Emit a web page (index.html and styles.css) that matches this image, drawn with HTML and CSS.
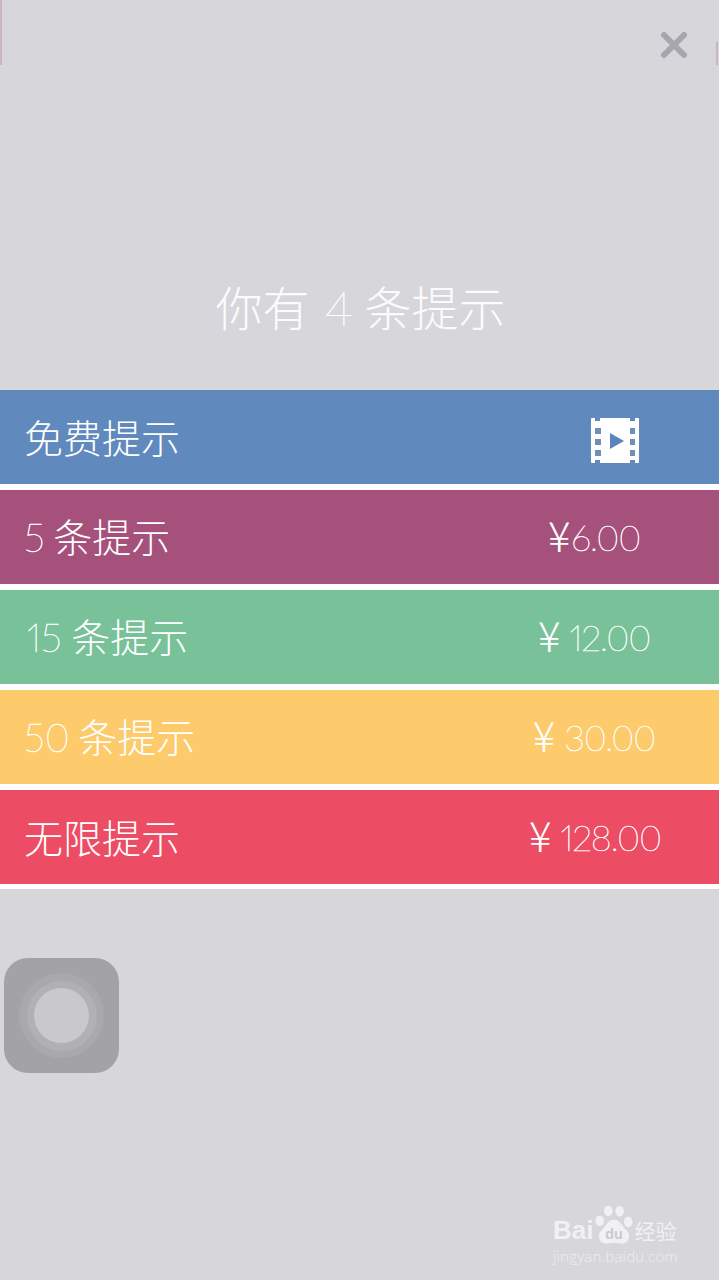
FILE: index.html
```html
<!DOCTYPE html>
<html>
<head>
<meta charset="UTF-8">
<title>提示</title>
<link rel="stylesheet" href="styles.css">
</head>
<body>
	<div class="page">
		<div class="edge edge-left"></div>
		<div class="edge edge-right"></div>

		<div class="top">
			<div class="close-row">
				<svg class="close" width="30" height="30" viewBox="0 0 30 30">
					<path d="M5 5L25 25M25 5L5 25" stroke="#a6a7ac" stroke-width="6" stroke-linecap="round"/>
				</svg>
			</div>
			<h1 class="title"><span>你有</span> <span class="num">4</span> <span>条提示</span></h1>
		</div>

		<div class="list">
			<div class="row blue">
				<span class="name">免费提示</span>
				<span class="price price-icon">
					<svg width="48" height="45" viewBox="0 0 48 45">
						<path fill="#fff" d="M1 0H4V3H9V0H39V3H44V0H47Q48 0 48 1V44Q48 45 47 45H44V42H39V45H9V42H4V45H1Q0 45 0 44V1Q0 0 1 0Z"/>
						<g fill="#6f8fb5">
							<rect x="4" y="10" width="6" height="6"/>
							<rect x="4" y="21" width="6" height="6"/>
							<rect x="4" y="32" width="6" height="6"/>
							<rect x="39" y="10" width="5" height="6"/>
							<rect x="39" y="21" width="5" height="6"/>
							<rect x="39" y="32" width="5" height="6"/>
						</g>
						<path fill="#5b85ba" d="M19 15L33 23L19 31Z"/>
					</svg>
				</span>
			</div>
			<div class="row purple">
				<span class="name"><span class="num">5</span> 条提示</span>
				<span class="price"><span class="yen">¥</span><span class="num tight">6.00</span></span>
			</div>
			<div class="row green">
				<span class="name"><span class="num fifteen">15</span> 条提示</span>
				<span class="price"><span class="yen">¥</span> <span class="num tight">12.00</span></span>
			</div>
			<div class="row yellow">
				<span class="name"><span class="num">50</span> 条提示</span>
				<span class="price"><span class="yen">¥</span> <span class="num tight">30.00</span></span>
			</div>
			<div class="row red">
				<span class="name">无限提示</span>
				<span class="price"><span class="yen">¥</span> <span class="num tight">128.00</span></span>
			</div>
		</div>

		<div class="touch">
			<div class="touch-ring3">
				<div class="touch-ring2">
					<div class="touch-dot"></div>
				</div>
			</div>
		</div>

		<div class="mark">
			<div class="mark-top">
				<span class="mark-bai">Bai</span>
				<svg class="mark-paw" width="38" height="41" viewBox="0 0 40 42">
					<g fill="#f1f1f4">
						<ellipse cx="5" cy="16" rx="4.5" ry="5.5"/>
						<ellipse cx="14" cy="5.5" rx="4.5" ry="5.5"/>
						<ellipse cx="26" cy="6" rx="4.5" ry="5.5"/>
						<ellipse cx="35" cy="17" rx="4.5" ry="5.5"/>
						<path d="M20 15C27 15 29 23 34 27C39 33 34 41 27 40C22 39 18 39 13 40C6 41 1 33 6 27C11 23 13 15 20 15Z"/>
					</g>
					<text x="20" y="35" class="mark-du">du</text>
				</svg>
				<span class="mark-cn">经验</span>
			</div>
			<div class="mark-url">jingyan.baidu.com</div>
		</div>
	</div>
</body>
</html>
```

FILE: styles.css
```css
html, body {
	margin: 0;
	padding: 0;
}

body {
	width: 719px;
	height: 1280px;
	overflow: hidden;
	background: #d6d6db;
	font-family: "Noto Sans CJK SC", sans-serif;
	font-weight: 300;
	color: #fff;
}

.page {
	position: relative;
	height: 1280px;
}

.edge {
	position: absolute;
	top: 0;
	width: 2px;
	height: 65px;
	background: #cdb4c4;
}

.edge-left {
	left: 0;
}

.edge-right {
	right: 1px;
	top: 42px;
	height: 23px;
}

.top {
	height: 390px;
	display: flex;
	flex-direction: column;
}

.close-row {
	display: flex;
	justify-content: flex-end;
	padding: 30px 30px 0 0;
}

.title {
	margin: 216px 0 0;
	padding-left: 2px;
	font-size: 47px;
	font-weight: 300;
	line-height: 60px;
	text-align: center;
	color: #fbfbfc;
}

.num {
	font-family: Lato, sans-serif;
	font-weight: 100;
	font-variant-numeric: proportional-nums;
	-webkit-text-stroke: 0.5px #fff;
}

.title .num {
	margin: 0 1px 0 5px;
}

.fifteen {
	margin-left: 3px;
	margin-right: 1px;
}

.list {
	display: flex;
	flex-direction: column;
	gap: 6px;
	padding-bottom: 5px;
	background: #fff;
}

.row {
	height: 94px;
	display: flex;
	align-items: center;
	justify-content: space-between;
	padding-left: 24px;
}

.blue {
	background: #6089bd;
}

.purple {
	background: #a5517b;
}

.green {
	background: #79c199;
}

.yellow {
	background: #fdca6c;
}

.red {
	background: #ec4c64;
}

.name {
	font-size: 39px;
	line-height: 50px;
	margin-top: -2px;
}

.price {
	width: 190px;
	padding-right: 60px;
	box-sizing: border-box;
	margin-top: -3px;
	text-align: center;
	font-size: 36px;
	line-height: 50px;
	white-space: nowrap;
}

.price-icon {
	height: 45px;
	line-height: 0;
	padding-right: 18px;
	margin-top: 6px;
}

.yen {
	font-family: "Noto Sans CJK SC", sans-serif;
	font-size: 42px;
	vertical-align: -1px;
	margin-right: 1px;
}

.tight {
	letter-spacing: -1.2px;
}

.touch {
	position: absolute;
	left: 4px;
	top: 958px;
	width: 115px;
	height: 115px;
	border-radius: 24px;
	background: #a3a3a7;
	display: flex;
	align-items: center;
	justify-content: center;
}

.touch-ring3 {
	width: 85px;
	height: 85px;
	border-radius: 50%;
	background: #a9a9ad;
	display: flex;
	align-items: center;
	justify-content: center;
}

.touch-ring2 {
	width: 70px;
	height: 70px;
	border-radius: 50%;
	background: #b1b1b5;
	display: flex;
	align-items: center;
	justify-content: center;
}

.touch-dot {
	width: 55px;
	height: 55px;
	border-radius: 50%;
	background: #c9c8cd;
}

.mark {
	position: absolute;
	left: 553px;
	top: 1202px;
	color: #f1f1f4;
}

.mark-top {
	display: flex;
	align-items: flex-end;
	height: 44px;
}

.mark-bai {
	font-family: "Liberation Sans", sans-serif;
	font-weight: 700;
	font-size: 26px;
	line-height: 32px;
}

.mark-paw {
	margin: 0 1px 0 2px;
}

.mark-cn {
	font-size: 21px;
	font-weight: 400;
	line-height: 32px;
}

.mark-du {
	font-family: "Liberation Sans", sans-serif;
	font-size: 15px;
	font-weight: 700;
	fill: #c9c9ce;
	text-anchor: middle;
}

.mark-url {
	font-family: "Open Sans", sans-serif;
	font-size: 15px;
	line-height: 20px;
	letter-spacing: 0.2px;
	color: #eeeef1;
}
```
